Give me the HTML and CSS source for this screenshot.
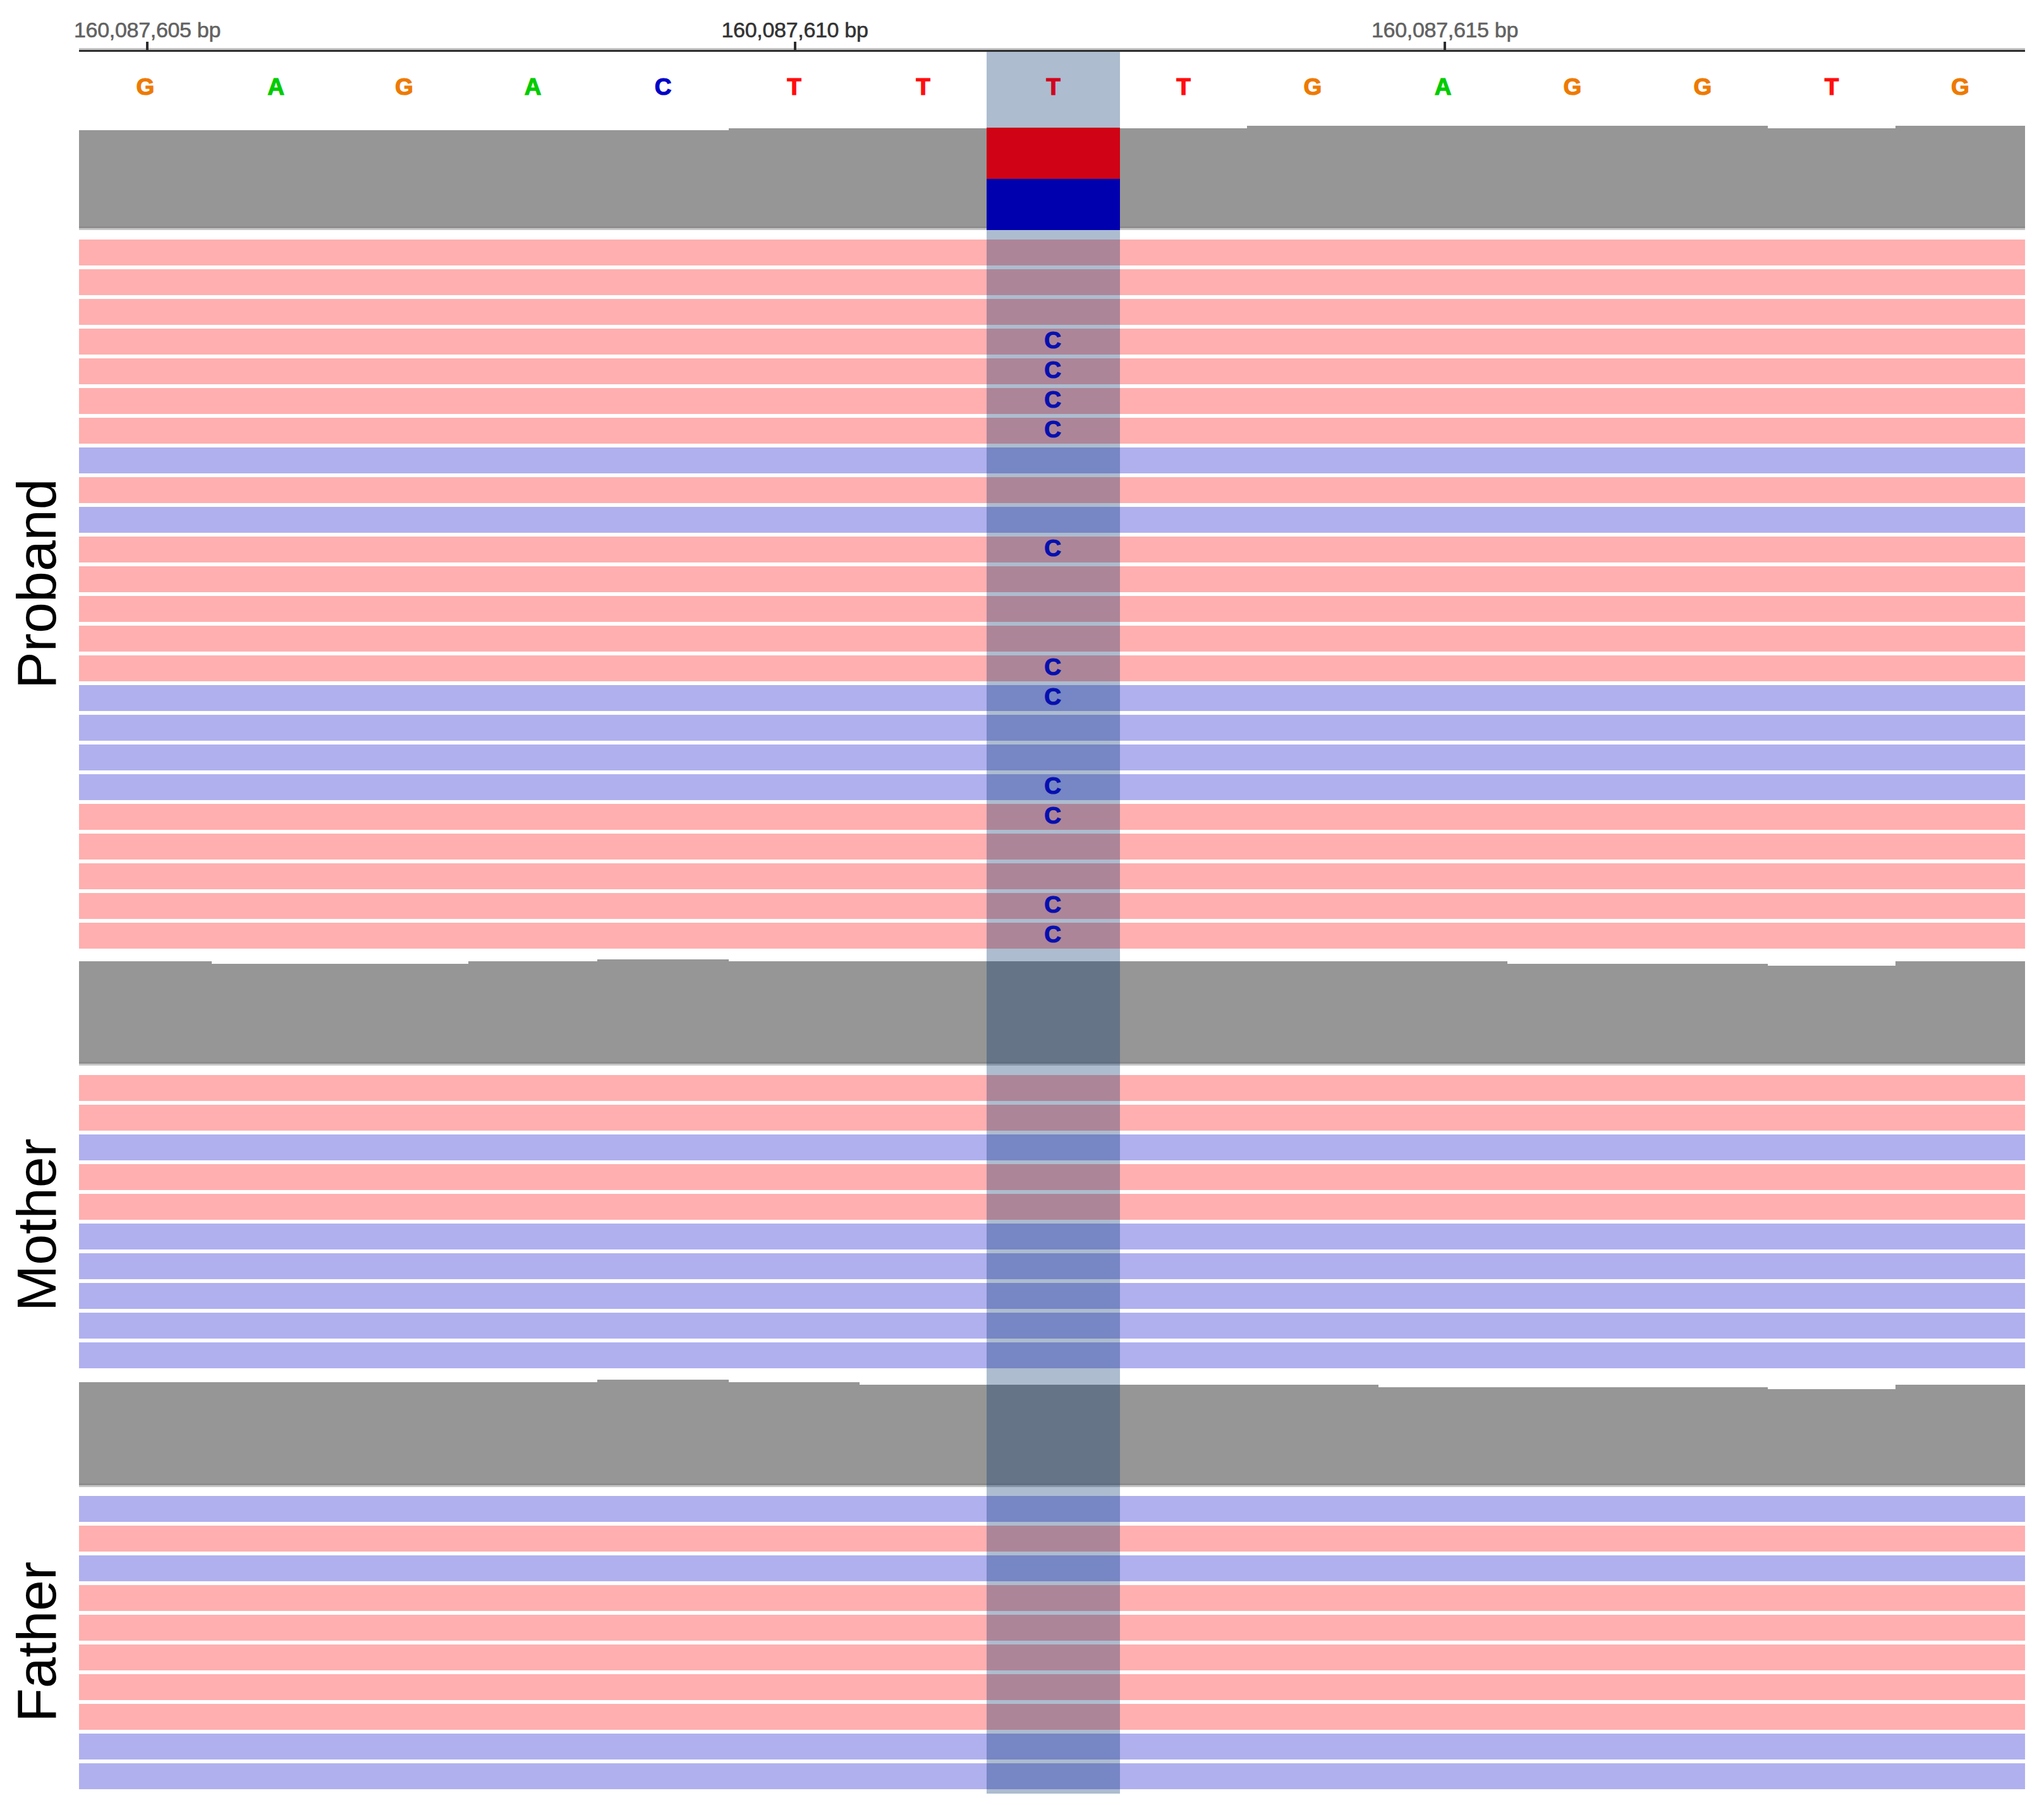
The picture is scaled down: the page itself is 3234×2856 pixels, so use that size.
FILE: index.html
```
<!DOCTYPE html>
<html lang="en">
<head>
  <meta charset="UTF-8" />
  <meta name="viewport" content="width=device-width, initial-scale=1.0">
  <title>Trio alignment view</title>
  <link rel="stylesheet" href="styles.css">
</head>
<body>

  <div class="viewer">
    <div class="highlight"></div>

    <div class="ruler columns">
      <div class="position first">160,087,605 bp</div>
      <div class="position middle">160,087,610 bp</div>
      <div class="position last">160,087,615 bp</div>
    </div>

    <div class="sequence columns" id="sequence"></div>

    <div class="track proband">
      <div class="label">Proband</div>
      <div class="lanes">
        <div class="coverage columns"></div>
        <div class="reads"></div>
      </div>
    </div>

    <div class="track mother">
      <div class="label">Mother</div>
      <div class="lanes">
        <div class="coverage columns"></div>
        <div class="reads"></div>
      </div>
    </div>

    <div class="track father">
      <div class="label">Father</div>
      <div class="lanes">
        <div class="coverage columns"></div>
        <div class="reads"></div>
      </div>
    </div>
  </div>

  <script>
    const sequence = "GAGACTTTTGAGGTG";

    // reads: f = forward strand, r = reverse strand, capital = carries the C allele
    const tracks = {
      proband: {
        coverage: [158, 158, 158, 158, 158, 161, 161, 162, 161, 165, 165, 165, 165, 161, 165],
        reads: "fffFFFFrfrFfffFRrrRFffFF",
        variant: true
      },
      mother: {
        coverage: [165, 161, 161, 165, 168, 165, 165, 165, 165, 165, 165, 161, 161, 158, 165],
        reads: "ffrffrrrrr"
      },
      father: {
        coverage: [166, 166, 166, 166, 170, 166, 162, 162, 162, 162, 158, 158, 158, 155, 162],
        reads: "rfrfffffrr"
      }
    };

    function add(parent, className, text) {
      const el = document.createElement("div");
      el.className = className;
      if (text) el.textContent = text;
      parent.appendChild(el);
      return el;
    }

    // Reference bases
    [...sequence].forEach((base, i) => {
      add(document.getElementById("sequence"), "base " + base + (i === 7 ? " center" : ""), base);
    });

    for (const name in tracks) {
      const data = tracks[name];
      const coverage = document.querySelector("." + name + " .coverage");
      const reads = document.querySelector("." + name + " .reads");

      data.coverage.forEach((height, i) => {
        const split = data.variant && i === 7;
        const bin = add(coverage, split ? "bin split" : "bin");
        bin.style.height = height + "px";
      });

      [...data.reads].forEach(r => {
        const read = add(reads, "read " + (r.toLowerCase() === "f" ? "forward" : "reverse"));
        if (r === r.toUpperCase()) add(read, "mismatch", "C");
      });
    }
  </script>

</body>
</html>
```
FILE: styles.css
```
* {
  margin: 0;
  padding: 0;
  box-sizing: border-box;
}

body {
  background: #fff;
  font-family: "Liberation Sans", Arial, sans-serif;
}

.viewer {
  position: relative;
  width: 3234px;
  height: 2856px;
  overflow: hidden;
}

/* One column for each base */
.columns {
  display: grid;
  grid-template-columns: 210px 203px 203px 204px 208px 207px 201px 211px 201px 208px 204px 206px 206px 202px 205px;
}

/* Selected base, drawn over all tracks */
.highlight {
  position: absolute;
  left: 1561px;
  top: 82px;
  width: 211px;
  height: 2756px;
  background: rgba(0, 46, 105, 0.32);
  z-index: 1;
}

/* Ruler */
.ruler {
  width: 3079px;
  height: 82px;
  margin-left: 125px;
  border-bottom: 3px solid #2e2e2e;
  box-shadow: inset 0 -3px #c4c4c4;
}

.position {
  display: flex;
  flex-direction: column;
  align-items: center;
  justify-content: space-between;
  justify-self: center;
  width: 0;
  height: 79px;
  padding-top: 28px;
  font-size: 34px;
  line-height: 38px;
  letter-spacing: -0.3px;
  white-space: nowrap;
  color: #626262;
  -webkit-text-stroke: 0.6px;
  grid-row: 1;
  position: relative;
  left: 3px;
}

.position::after {
  content: "";
  width: 4px;
  height: 13px;
  background: #2e2e2e;
  flex: none;
}

.first {
  grid-column: 1;
}

.middle {
  grid-column: 6;
  left: 1px;
  color: #333;
}

.last {
  grid-column: 11;
}

/* Reference sequence */
.sequence {
  width: 3079px;
  height: 117px;
  margin-left: 125px;
  padding-top: 34px;
}

.base,
.mismatch {
  font-size: 37px;
  font-weight: bold;
  line-height: 44px;
  text-align: center;
  -webkit-text-stroke: 1.2px;
}

.A { color: #00cc00; }
.C { color: #0000c8; }
.G { color: #ee7a00; }
.T { color: #ff0d0d; }

.base.center {
  position: relative;
  z-index: 2;
  color: #d2041b;
}

/* Tracks */
.track {
  display: flex;
}

.label {
  width: 125px;
  flex: none;
  writing-mode: vertical-rl;
  transform: rotate(180deg);
  font-size: 88px;
  line-height: 116px;
  color: #000;
  text-align: right;
}

.lanes {
  width: 3079px;
}

.coverage {
  align-items: end;
}

.bin {
  background: #969696;
  border-bottom: 3px solid #c6c6c6;
  box-shadow: inset 0 -3px #8d8d8d;
}

.bin.split {
  position: relative;
  z-index: 2;
  border-bottom: none;
  box-shadow: none;
  background: linear-gradient(#cf0315 50%, #0000af 50%);
}

.reads {
  display: flex;
  flex-direction: column;
  gap: 6px;
}

.read {
  height: 41px;
  padding-left: 1435px;
}

.forward {
  background: #ffafaf;
}

.reverse {
  background: #b0b0ef;
}

.mismatch {
  position: relative;
  z-index: 2;
  width: 211px;
  line-height: 38px;
  color: #0610b0;
}

.proband .coverage {
  height: 165px;
  margin-bottom: 15px;
}

.proband .label {
  padding-bottom: 558px;
}

.mother {
  margin-top: 17px;
}

.mother .coverage {
  height: 168px;
  margin-bottom: 15px;
}

.mother .label {
  padding-bottom: 283px;
}

.father {
  margin-top: 18px;
}

.father .coverage {
  height: 170px;
  margin-bottom: 14px;
}

.father .label {
  padding-bottom: 288px;
}
```
